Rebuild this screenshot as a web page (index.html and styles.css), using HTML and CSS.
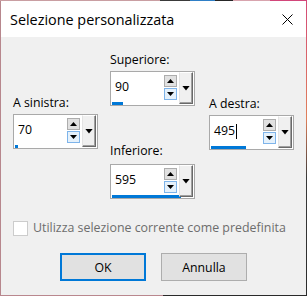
FILE: index.html
```html
<!DOCTYPE html>
<html lang="it">
<head>
<meta charset="utf-8">
<title>Selezione personalizzata</title>
<link rel="stylesheet" href="styles.css">
</head>
<body>
<div class="window">
  <div class="titlebar">
    <span class="title">Selezione personalizzata</span>
    <svg class="close" width="11" height="11" viewBox="0 0 11 11"><path d="M0.5 0.5 L10.5 10.5 M10.5 0.5 L0.5 10.5" stroke="#000" stroke-width="1" fill="none"/></svg>
  </div>
  <div class="content">
    <div class="controls">
      <div class="group side-left">
        <div class="label">A sinistra:</div>
        <div class="spin">
          <div class="field"><div class="val">70</div><div class="bar" style="width:3px"></div></div>
          <div class="arrows"><span class="arr up"></span><span class="arr down"></span></div>
          <div class="drop"></div>
        </div>
      </div>
      <div class="center">
        <div class="group">
          <div class="label">Superiore:</div>
          <div class="spin">
            <div class="field"><div class="val">90</div><div class="bar" style="width:11px"></div></div>
            <div class="arrows"><span class="arr up"></span><span class="arr down"></span></div>
            <div class="drop"></div>
          </div>
        </div>
        <div class="group bottom">
          <div class="label">Inferiore:</div>
          <div class="spin">
            <div class="field"><div class="val">595</div><div class="bar" style="width:69px"></div></div>
            <div class="arrows"><span class="arr up"></span><span class="arr down"></span></div>
            <div class="drop"></div>
          </div>
        </div>
      </div>
      <div class="group side-right">
        <div class="label">A destra:</div>
        <div class="spin">
          <div class="field"><div class="val">495<span class="caret"></span></div><div class="bar" style="width:35px"></div></div>
          <div class="arrows"><span class="arr up"></span><span class="arr down"></span></div>
          <div class="drop"></div>
        </div>
      </div>
    </div>
    <div class="check">
      <span class="checkbox"></span>
      <span class="check-text">Utilizza selezione corrente come predefinita</span>
    </div>
    <div class="buttons">
      <button class="btn default">OK</button>
      <button class="btn">Annulla</button>
    </div>
  </div>
</div>
</body>
</html>
```
FILE: styles.css
```css
html, body {
  margin: 0;
  padding: 0;
  background: #f0f0f0;
}
body {
  font-family: "Open Sans", "Noto Sans", sans-serif;
  font-size: 12.3px;
  color: #000;
}
.window {
  width: 307px;
  height: 296px;
  box-sizing: border-box;
  padding: 1px;
  display: flex;
  flex-direction: column;
  background:
    linear-gradient(to right, #c99ea2 0 52%, #3a3a3a 52% 62%, #2f7fc6 62% 70%, #262626 70% 76%, #d8a4ae 76% 88%, #d2467a 88%) top / 100% 1px no-repeat,
    linear-gradient(to right, #b9878e 0 53%, #2a2a2a 53%) bottom / 100% 1px no-repeat,
    linear-gradient(#d44a78, #e0805a 40%, #3a3a3a 60%, #2c2c2c) right / 1px 100% no-repeat,
    #b7878d;
}
.titlebar {
  height: 36px;
  flex: none;
  background: #fff;
  display: flex;
  align-items: center;
  justify-content: space-between;
  padding: 0 13px 0 9px;
}
.title {
  font-size: 14.4px;
  color: #000;
}
.close {
  display: block;
}
.content {
  flex: 1;
  background: #f0f0f0;
  padding: 15px 0 0 12px;
  display: flex;
  flex-direction: column;
}
.controls {
  display: flex;
  align-items: flex-start;
}
.group {
  display: flex;
  flex-direction: column;
  gap: 3px;
}
.side-left {
  margin-top: 43px;
}
.center {
  margin-left: 12px;
  display: flex;
  flex-direction: column;
}
.center .bottom {
  margin-top: 37px;
  gap: 5px;
}
.side-right {
  margin-left: 14px;
  margin-top: 44px;
}
.label {
  line-height: 16px;
  white-space: nowrap;
}
.spin {
  display: flex;
  width: 85px;
  height: 35px;
  box-sizing: border-box;
  border: 1px solid #a9a9a9;
  background: #fff;
}
.field {
  width: 52px;
  display: flex;
  flex-direction: column;
}
.val {
  flex: 1;
  display: flex;
  align-items: center;
  padding-left: 4px;
  line-height: 16px;
}
.caret {
  display: inline-block;
  width: 1px;
  height: 15px;
  background: #000;
  margin-left: 1px;
}
.bar {
  height: 3px;
  margin-left: 1px;
  background: #0078d7;
}
.arrows {
  width: 13px;
  margin-left: 1px;
  padding-top: 3px;
  display: flex;
  flex-direction: column;
  gap: 1px;
}
.arr {
  height: 12px;
  box-sizing: border-box;
  border: 1px solid #adadad;
  background: #e1e1e1;
  display: flex;
  align-items: center;
  justify-content: center;
}
.arr::before {
  content: "";
  width: 7px;
  height: 4px;
  background: #000;
}
.up::before {
  clip-path: polygon(50% 0, 100% 100%, 0 100%);
}
.down {
  border-color: #7eb4ea;
  background: #e5f1fb;
}
.down::before {
  clip-path: polygon(0 0, 100% 0, 50% 100%);
}
.drop {
  width: 14px;
  height: 32px;
  margin-left: 2px;
  box-sizing: border-box;
  border-top: 1px solid #fff;
  border-left: 1px solid #e3e3e3;
  border-right: 1px solid #696969;
  border-bottom: 1px solid #696969;
  box-shadow: inset -1px -1px 0 #a0a0a0;
  background: #f0f0f0;
  display: flex;
  align-items: center;
  justify-content: center;
}
.drop::before {
  content: "";
  width: 8px;
  height: 5px;
  background: #000;
  clip-path: polygon(0 0, 100% 0, 50% 100%);
}
.check {
  margin-top: 21px;
  display: flex;
  align-items: center;
  gap: 5px;
  color: #6d6d6d;
}
.checkbox {
  width: 15px;
  height: 15px;
  box-sizing: border-box;
  border: 1px solid #cccccc;
  background: #fff;
}
.check-text {
  font-size: 12.4px;
  line-height: 16px;
  white-space: nowrap;
}
.buttons {
  margin-top: 17px;
  padding-left: 47px;
  display: flex;
  gap: 15px;
}
.btn {
  width: 86px;
  height: 28px;
  box-sizing: border-box;
  margin: 0;
  padding: 0;
  border: 1px solid #adadad;
  background: #e1e1e1;
  font-family: inherit;
  font-size: 12.3px;
  color: #000;
}
.btn.default {
  border: 2px solid #0078d7;
}
```
